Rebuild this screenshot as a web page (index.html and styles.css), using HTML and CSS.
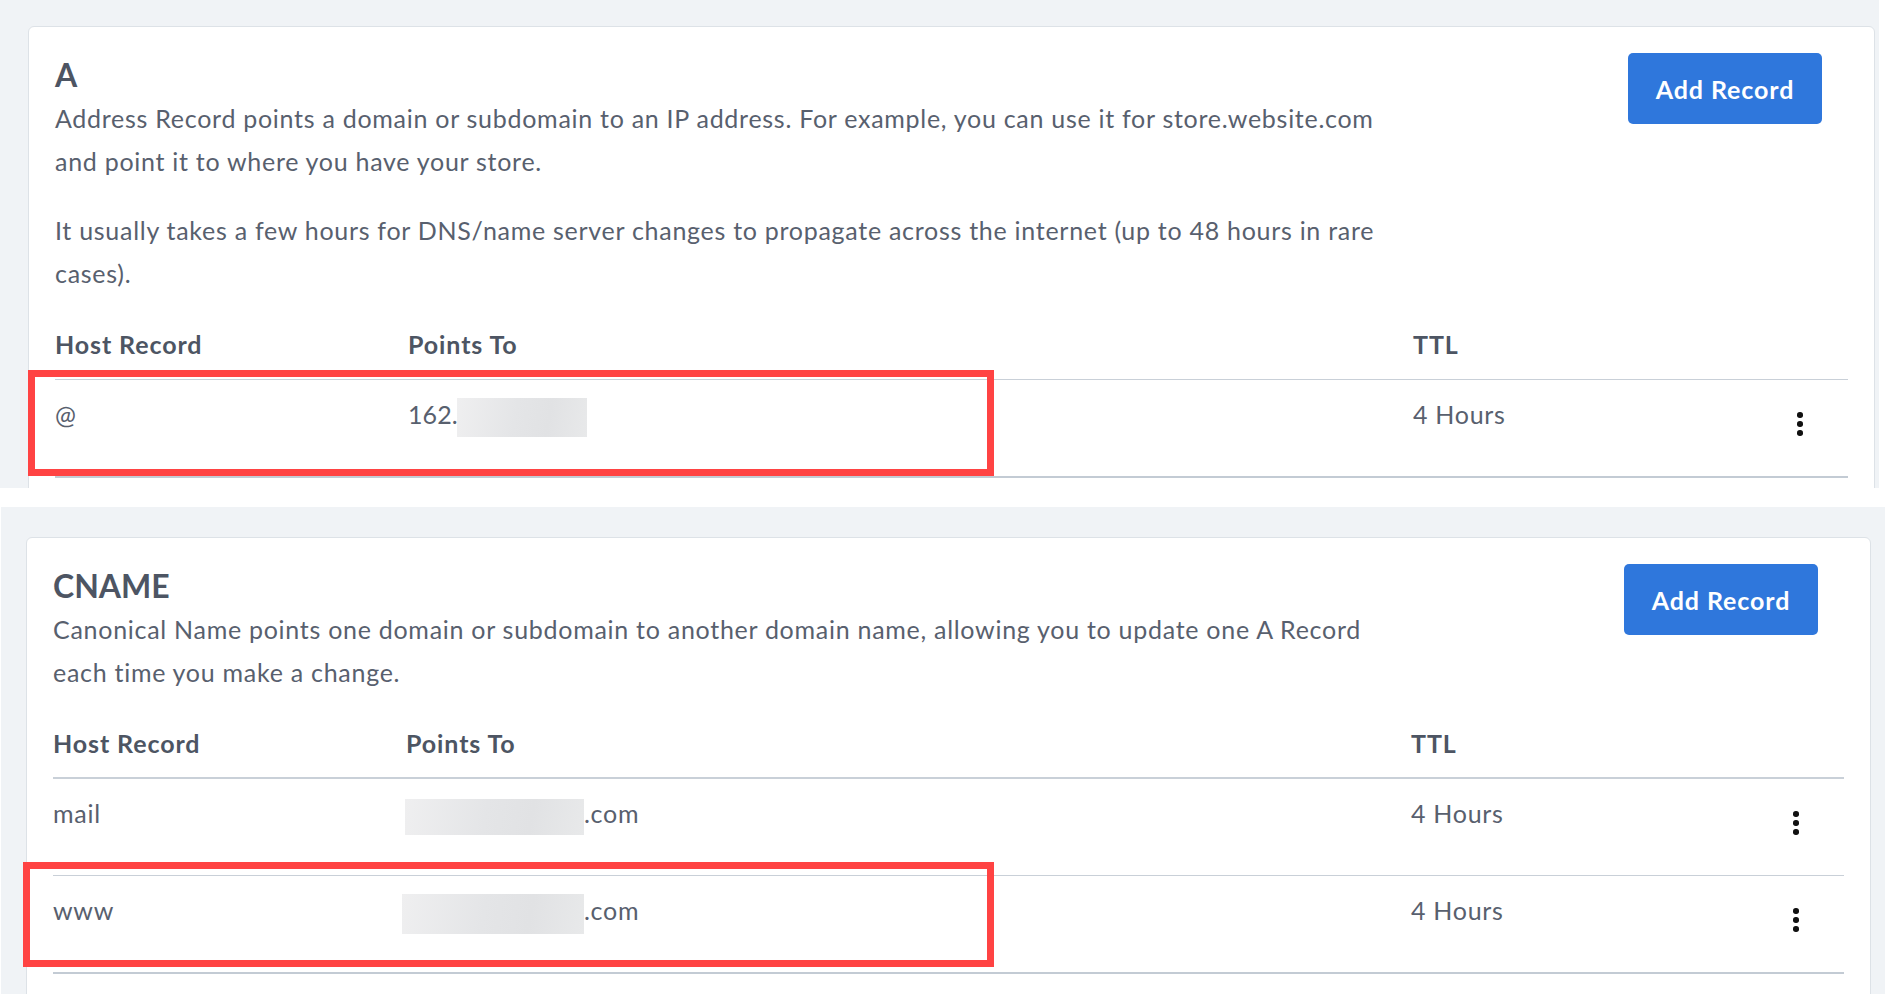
FILE: index.html
```html
<!DOCTYPE html>
<html lang="en">
<head>
<meta charset="utf-8">
<title>DNS Records</title>
<link rel="stylesheet" href="styles.css">
</head>
<body>
<div class="shot shot-a">
  <section class="card">
    <div class="card-head">
      <div class="intro">
        <h2 class="title">A</h2>
        <p class="desc">Address Record points a domain or subdomain to an IP address. For example, you can use it for store.website.com<br>and point it to where you have your store.</p>
        <p class="desc gap">It usually takes a few hours for DNS/name server changes to propagate across the internet (up to 48 hours in rare<br>cases).</p>
      </div>
      <button class="add-btn" type="button">Add Record</button>
    </div>
    <div class="table">
      <div class="row head"><div>Host Record</div><div>Points To</div><div>TTL</div><div></div></div>
      <div class="row last">
        <div class="light">@</div>
        <div><span class="ip">162.</span><span class="blur blur-ip"></span></div>
        <div>4 Hours</div>
        <div class="menu-cell"><span class="kebab"><i></i><i></i><i></i></span></div>
      </div>
    </div>
  </section>
  <div class="mark mark-a"></div>
</div>

<div class="shot shot-b">
  <section class="card">
    <div class="card-head">
      <div class="intro">
        <h2 class="title">CNAME</h2>
        <p class="desc">Canonical Name points one domain or subdomain to another domain name, allowing you to update one A Record<br>each time you make a change.</p>
      </div>
      <button class="add-btn" type="button">Add Record</button>
    </div>
    <div class="table">
      <div class="row head thick"><div>Host Record</div><div>Points To</div><div>TTL</div><div></div></div>
      <div class="row">
        <div>mail</div>
        <div><span class="blur blur-mail"></span>.com</div>
        <div>4 Hours</div>
        <div class="menu-cell"><span class="kebab"><i></i><i></i><i></i></span></div>
      </div>
      <div class="row last">
        <div>www</div>
        <div><span class="blur blur-www"></span>.com</div>
        <div>4 Hours</div>
        <div class="menu-cell"><span class="kebab"><i></i><i></i><i></i></span></div>
      </div>
    </div>
  </section>
  <div class="mark mark-b"></div>
</div>
</body>
</html>
```

FILE: styles.css
```css
* { box-sizing: border-box; }

html, body {
  margin: 0;
  padding: 0;
  background: #ffffff;
}

body {
  font-family: "Lato", "Liberation Sans", sans-serif;
  color: #58606e;
  width: 1885px;
  height: 994px;
  overflow: hidden;
}

.shot {
  position: relative;
  background: #f0f3f6;
  overflow: hidden;
}

.shot-a {
  width: 1879px;
  height: 488px;
  padding: 26px 0 0 28px;
}

.shot-b {
  margin: 19px 0 0 1px;
  width: 1884px;
  height: 487px;
  padding: 30px 0 0 25px;
}

.card {
  background: #ffffff;
  border: 1px solid #dde2e7;
  border-radius: 6px;
  padding: 26px 26px 0 26px;
  height: 600px;
}

.shot-a .card { width: 1847px; }
.shot-b .card { width: 1845px; }

.card-head {
  display: flex;
  justify-content: space-between;
  align-items: flex-start;
}

.title {
  margin: 0;
  font-size: 32px;
  line-height: 44px;
  font-weight: 700;
  color: #4d5563;
}

.desc {
  margin: 0;
  font-size: 25px;
  letter-spacing: 0.72px;
  line-height: 43px;
  white-space: nowrap;
}

.desc.gap { margin-top: 26px; }

.add-btn {
  margin: 0 26px 0 0;
  width: 194px;
  height: 71px;
  border: none;
  border-radius: 5px;
  background: #2f77dc;
  color: #ffffff;
  font-family: inherit;
  font-size: 25px;
  letter-spacing: 0.9px;
  font-weight: 700;
  padding: 0;
  flex: none;
}

.table {
  margin-top: 34px;
}

.row {
  display: grid;
  grid-template-columns: 353px 1005px 1fr 96px;
  font-size: 25px;
  letter-spacing: 0.72px;
  line-height: 30px;
  height: 97px;
  padding: 19px 0 0;
  border-bottom: 1px solid #c9d0d8;
  white-space: nowrap;
}

.row.head {
  height: auto;
  padding: 0 0 20px;
  font-weight: 700;
  letter-spacing: 0.9px;
  color: #4d5563;
}

.row.head.thick { border-bottom-width: 2px; padding-bottom: 19px; }

.row.last { border-bottom: 2px solid #c3cbd4; height: 98px; }

.ip { letter-spacing: 0.1px; }

.blur {
  display: inline-block;
  vertical-align: middle;
  background: linear-gradient(100deg, #efeff0 0%, #e4e5e7 45%, #e1e2e4 70%, #e8e9ea 100%);
}

.blur-ip { width: 130px; height: 39px; margin: -6px 0 -6px -1px; }
.blur-mail { width: 179px; height: 36px; margin: -5px 0 -5px -1px; }
.blur-www { width: 182px; height: 40px; margin: -7px 0 -7px -4px; }

.menu-cell {
  display: flex;
  justify-content: center;
  height: 30px;
}

.kebab {
  display: flex;
  flex-direction: column;
  gap: 3.5px;
  margin-top: 13px;
  height: 23.5px;
}

.kebab i {
  display: block;
  width: 5.5px;
  height: 5.5px;
  border-radius: 50%;
  background: #111111;
}

.mark {
  position: absolute;
  border: 7px solid #ff4343;
}

.mark-a { left: 28px; top: 370px; width: 966px; height: 106px; }
.mark-b { left: 22px; top: 355px; width: 971px; height: 105px; }
```
